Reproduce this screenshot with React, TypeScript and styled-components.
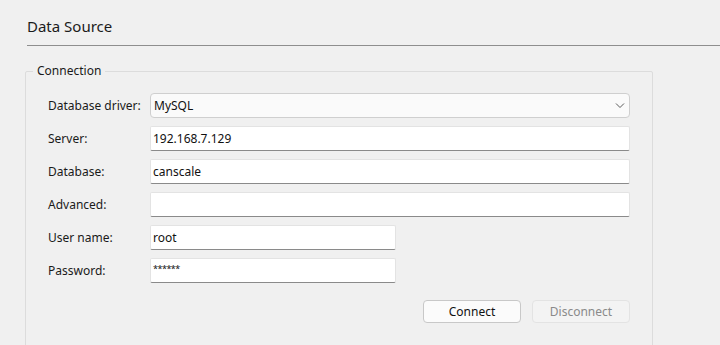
import styled, { createGlobalStyle } from "styled-components";

const GlobalStyle = createGlobalStyle`
    html, body {
        margin: 0;
        padding: 0;
        background: #f0f0f0;
    }
    * {
        box-sizing: border-box;
    }
`;

interface FieldProps {
    label: string;
    value?: string;
    short?: boolean;
    secret?: boolean;
}

const Field = ({ label, value, short, secret }: FieldProps) => (
    <>
        <Label>{label}</Label>
        <TextBox short={short} secret={secret}>
            {value}
        </TextBox>
    </>
);

const App = () => {
    return (
        <Page>
            <GlobalStyle />
            <Title>Data Source</Title>
            <Divider />
            <Group>
                <Legend>Connection</Legend>
                <FormGrid>
                    <Label>Database driver:</Label>
                    <Combo>
                        <span>MySQL</span>
                        <svg width="10" height="6" viewBox="0 0 10 6">
                            <path d="M1 0.5 L5 4.5 L9 0.5" fill="none" stroke="#5a5a5a" strokeWidth="1" />
                        </svg>
                    </Combo>
                    <Field label="Server:" value="192.168.7.129" />
                    <Field label="Database:" value="canscale" />
                    <Field label="Advanced:" value="" />
                    <Field label="User name:" value="root" short />
                    <Field label="Password:" value="******" short secret />
                </FormGrid>
                <ButtonRow>
                    <Button>Connect</Button>
                    <Button disabled>Disconnect</Button>
                </ButtonRow>
            </Group>
        </Page>
    );
};

export default App;

const Page = styled.div`
    width: 720px;
    height: 345px;
    overflow: hidden;
    background: #f0f0f0;
    padding-top: 16px;
    font-family: "Noto Sans", "Segoe UI", sans-serif;
    color: #1a1a1a;
`;

const Title = styled.div`
    margin-left: 27px;
    font-size: 15px;
    line-height: 20px;
    color: #1b1b1b;
`;

const Divider = styled.div`
    margin: 9px 0 0 27px;
    height: 1px;
    background: #8e8e8e;
`;

const Group = styled.fieldset`
    margin: 17px 0 0 25px;
    width: 628px;
    height: 320px;
    padding: 14px 0 0 0;
    border: 1px solid #dcdcdc;
    border-radius: 2px;
`;

const Legend = styled.legend`
    margin-left: 7px;
    padding: 0 4px;
    font-size: 12px;
    line-height: 16px;
    color: #1a1a1a;
`;

const FormGrid = styled.div`
    display: grid;
    grid-template-columns: 102px 1fr;
    row-gap: 8px;
    align-items: center;
    margin: 0 22px;
`;

const Label = styled.div`
    font-size: 12px;
    line-height: 16px;
    color: #1a1a1a;
`;

const Combo = styled.div`
    height: 25px;
    display: flex;
    align-items: center;
    justify-content: space-between;
    padding: 0 4px 0 3px;
    background: #fafafa;
    border: 1px solid #cfcfcf;
    border-radius: 4px;
    font-size: 12px;
    color: #111;
`;

const TextBox = styled.div<{ short?: boolean; secret?: boolean }>`
    height: 25px;
    width: ${({ short }) => (short ? "246px" : "100%")};
    display: flex;
    align-items: ${({ secret }) => (secret ? "flex-start" : "center")};
    padding: ${({ secret }) => (secret ? "3px 2px 0" : "0 2px")};
    background: #ffffff;
    border: 1px solid #e3e3e3;
    border-bottom-color: #8a8a8a;
    border-radius: 2px;
    font-size: ${({ secret }) => (secret ? "9px" : "12px")};
    letter-spacing: ${({ secret }) => (secret ? "-0.5px" : "0")};
    color: #111;
`;

const ButtonRow = styled.div`
    display: flex;
    justify-content: flex-end;
    gap: 11px;
    margin: 17px 22px 0;
`;

const Button = styled.button`
    width: 98px;
    height: 23px;
    padding: 0;
    font-family: "Noto Sans", "Segoe UI", sans-serif;
    font-size: 12px;
    border-radius: 4px;
    background: ${({ disabled }) => (disabled ? "#f3f3f3" : "#fbfbfb")};
    border: 1px solid ${({ disabled }) => (disabled ? "#e3e3e3" : "#c8c8c8")};
    color: ${({ disabled }) => (disabled ? "#8a8a8a" : "#111")};
`;
